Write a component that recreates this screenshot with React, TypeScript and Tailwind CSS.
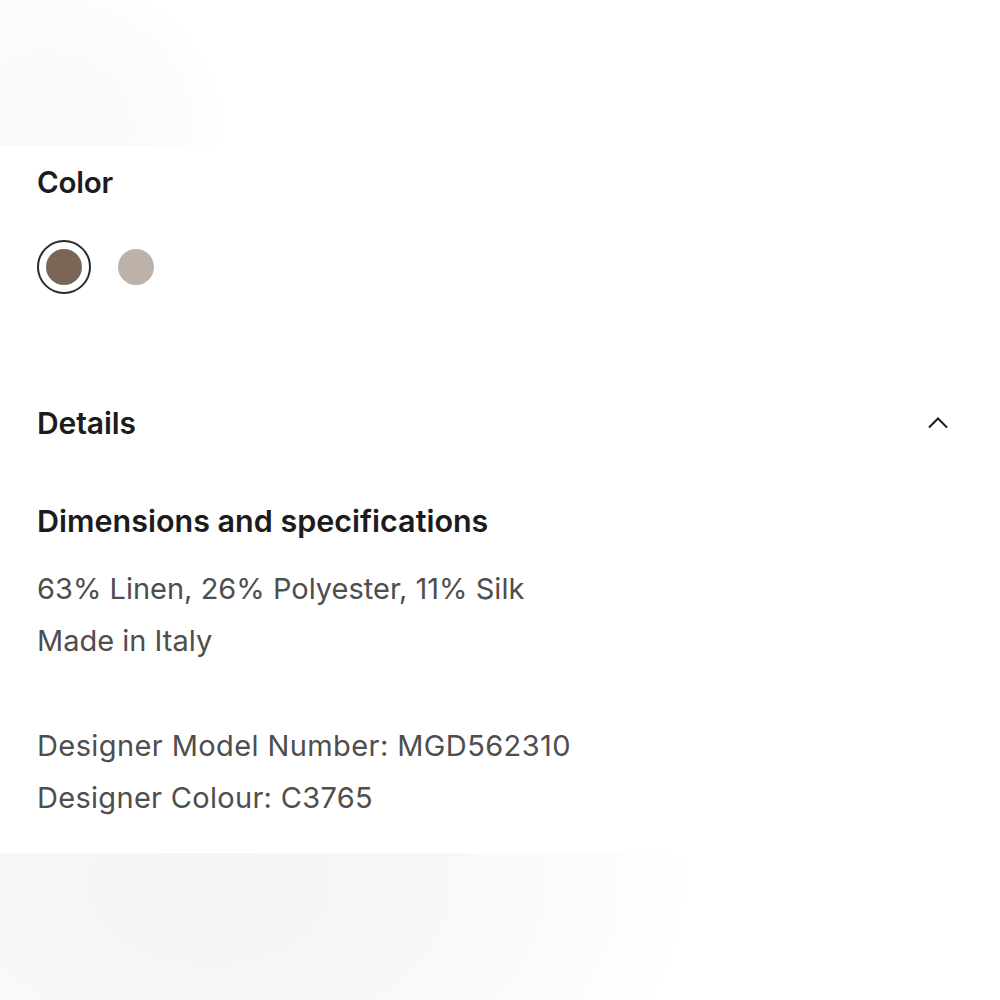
import React from "react";

const swatches = [
  { name: "Brown", color: "#7a6556" },
  { name: "Taupe", color: "#bdb2aa" },
];

const App: React.FC = () => {
  return (
    <div className="w-[1000px] h-[1000px] bg-white flex flex-col overflow-hidden" style={{ fontFamily: "Inter, 'Liberation Sans', sans-serif" }}>
      {/* faded image area above */}
      <div className="h-[146px] shrink-0 bg-[radial-gradient(ellipse_180px_160px_at_45px_130px,#faf8f8,#fcfbfb_70%,#ffffff)]" />

      {/* Product info card */}
      <div className="flex-1 flex flex-col px-[37px]">
        <h3 className="text-[29.5px] leading-[36px] font-semibold text-[#1c1c1c] mt-[18px] tracking-[-0.2px]">Color</h3>

        <div className="flex items-center gap-[27px] mt-[40px]">
          {swatches.map((s, i) => (
            <button
              key={s.name}
              className={
                i === 0
                  ? "w-[54px] h-[54px] rounded-full border-2 border-[#2a2a2a] flex items-center justify-center"
                  : "w-[36px] h-[36px] rounded-full flex items-center justify-center"
              }
            >
              <span className="block w-[36px] h-[36px] rounded-full" style={{ backgroundColor: s.color }} />
            </button>
          ))}
        </div>

        {/* Details accordion */}
        <div className="flex items-center justify-between mt-[111px] pr-[15px]">
          <h3 className="text-[30px] leading-[36px] font-semibold text-[#1c1c1c] tracking-[-0.1px]">Details</h3>
          <svg width="20" height="12" viewBox="0 0 20 12" fill="none" stroke="#1c1c1c" strokeWidth="2">
            <path d="M1 10.5 L10 1.5 L19 10.5" />
          </svg>
        </div>

        <h4 className="text-[30.5px] leading-[36px] font-semibold text-[#1c1c1c] mt-[62px]">Dimensions and specifications</h4>
        <div className="mt-[24px] text-[29px] leading-[52px] text-[#4e4e4e]">
          <p>63% Linen, 26% Polyester, 11% Silk</p>
          <p>Made in Italy</p>
          <p className="mt-[53px] tracking-[0.4px]">Designer Model Number: MGD562310</p>
          <p className="tracking-[0.3px]">Designer Colour: C3765</p>
        </div>
      </div>

      {/* faded image area below */}
      <div className="h-[147px] shrink-0 bg-[radial-gradient(ellipse_480px_320px_at_210px_30px,#f4f4f4,#f7f7f7_40%,#fbfbfb_75%,#ffffff)]" />
    </div>
  );
};

export default App;
